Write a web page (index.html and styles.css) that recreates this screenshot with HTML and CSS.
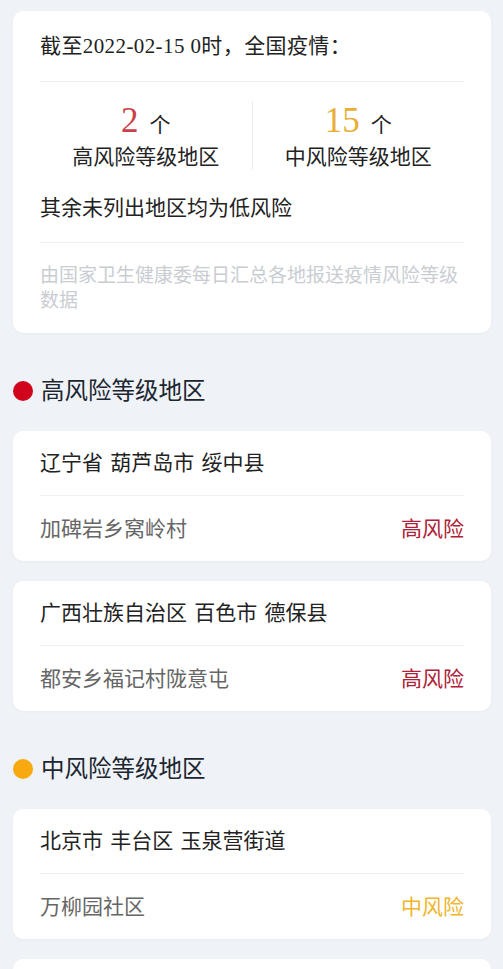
FILE: index.html
```html
<!DOCTYPE html>
<html lang="zh-CN">
<head>
    <meta charset="UTF-8">
    <meta name="viewport" content="width=device-width, initial-scale=1.0">
    <title>疫情风险等级查询</title>
    <link rel="stylesheet" href="styles.css">
</head>
<body>
    <div class="page">
        <div class="card summary">
            <div class="summary-title">截至2022-02-15 0时，全国疫情：</div>
            <div class="stats">
                <div class="stat">
                    <div class="stat-num"><span class="num high">2</span>个</div>
                    <div class="stat-label">高风险等级地区</div>
                </div>
                <div class="stat">
                    <div class="stat-num"><span class="num mid">15</span>个</div>
                    <div class="stat-label">中风险等级地区</div>
                </div>
            </div>
            <div class="summary-note">其余未列出地区均为低风险</div>
            <div class="summary-source">由国家卫生健康委每日汇总各地报送疫情风险等级数据</div>
        </div>

        <h2 class="section-title"><span class="dot high-dot"></span>高风险等级地区</h2>

        <div class="card area">
            <div class="area-row">辽宁省 葫芦岛市 绥中县</div>
            <div class="area-row sub">
                <span>加碑岩乡窝岭村</span>
                <span class="level high-level">高风险</span>
            </div>
        </div>

        <div class="card area">
            <div class="area-row">广西壮族自治区 百色市 德保县</div>
            <div class="area-row sub">
                <span>都安乡福记村陇意屯</span>
                <span class="level high-level">高风险</span>
            </div>
        </div>

        <h2 class="section-title"><span class="dot mid-dot"></span>中风险等级地区</h2>

        <div class="card area">
            <div class="area-row">北京市 丰台区 玉泉营街道</div>
            <div class="area-row sub">
                <span>万柳园社区</span>
                <span class="level mid-level">中风险</span>
            </div>
        </div>

        <!-- next entry, only its top edge is in view -->
        <div class="card area placeholder"></div>
    </div>
</body>
</html>
```
FILE: styles.css
```css
body {
    margin: 0;
    padding: 0;
    background: #eff2f6;
    font-family: "Liberation Serif", "Noto Sans CJK SC", serif;
    font-size: 21px;
    color: #222;
}

.page {
    padding: 11px 12px 20px 13px;
}

.card {
    background: #fff;
    border-radius: 10px;
    padding: 0 27px;
    box-shadow: 0 1px 3px rgba(0, 0, 0, 0.04);
}

.summary-title {
    line-height: 26px;
    padding: 22px 0;
    border-bottom: 1px solid #f1f1f1;
    letter-spacing: 0.4px;
}

.stats {
    display: flex;
    padding-top: 19px;
}

.stat {
    flex: 1;
    text-align: center;
}

.stat + .stat {
    border-left: 1px solid #ececec;
}

.stat-num {
    height: 40px;
    line-height: 40px;
    margin-bottom: 3px;
}

.num {
    font-size: 35px;
    margin-right: 11px;
}

.num.high {
    color: #cb4048;
}

.num.mid {
    color: #e9ae35;
}

.stat-label {
    line-height: 26px;
}

.summary-note {
    line-height: 26px;
    margin-top: 25px;
    padding-bottom: 21px;
    border-bottom: 1px solid #f1f1f1;
}

.summary-source {
    color: #c9cdd2;
    font-size: 19px;
    line-height: 25px;
    padding: 20px 0 20px;
}

.section-title {
    display: flex;
    align-items: center;
    margin: 42px 0 24px;
    font-size: 23.5px;
    font-weight: normal;
    line-height: 32px;
    color: #1b2631;
}

.dot {
    width: 20px;
    height: 20px;
    border-radius: 50%;
    margin-right: 8px;
}

.high-dot {
    background: #d0041c;
}

.mid-dot {
    background: #f7a90f;
}

.area {
    margin-bottom: 20px;
}

.placeholder {
    height: 130px;
}

.area-row {
    line-height: 26px;
    padding: 19px 0;
    word-spacing: 2px;
}

.area-row.sub {
    display: flex;
    justify-content: space-between;
    padding: 20px 0 19px;
    color: #666;
    border-top: 1px solid #f1f1f1;
    word-spacing: 0;
}

.high-level {
    color: #ad2237;
}

.mid-level {
    color: #efb52e;
}
```
